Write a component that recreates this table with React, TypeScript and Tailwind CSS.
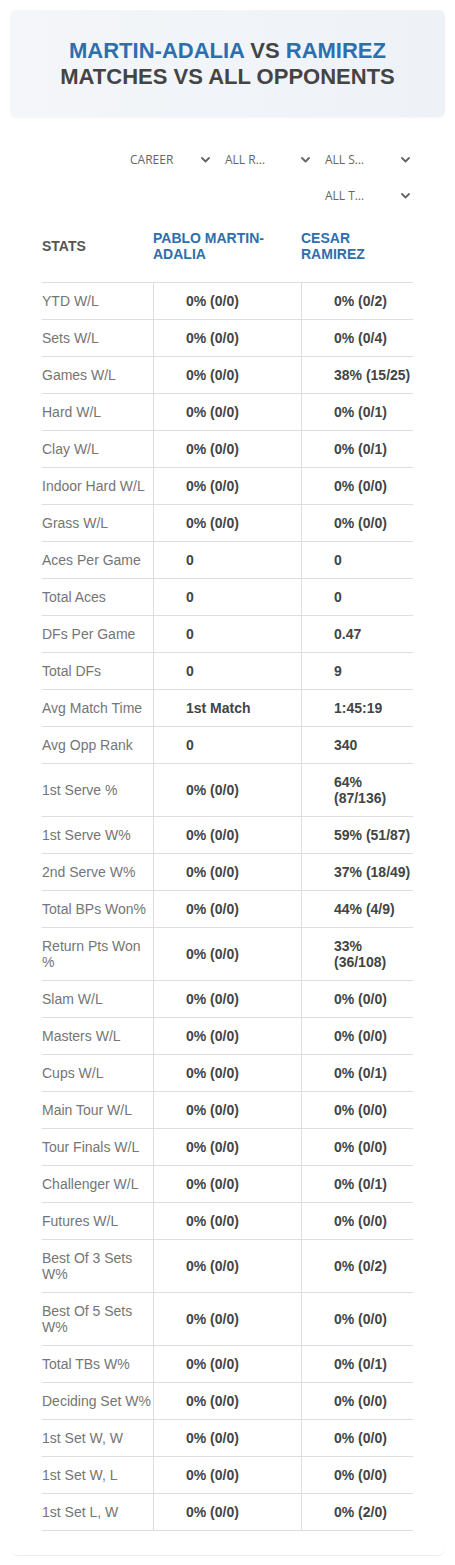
import React from "react";

const rows: [string, string, string][] = [
  ["YTD W/L", "0% (0/0)", "0% (0/2)"],
  ["Sets W/L", "0% (0/0)", "0% (0/4)"],
  ["Games W/L", "0% (0/0)", "38% (15/25)"],
  ["Hard W/L", "0% (0/0)", "0% (0/1)"],
  ["Clay W/L", "0% (0/0)", "0% (0/1)"],
  ["Indoor Hard W/L", "0% (0/0)", "0% (0/0)"],
  ["Grass W/L", "0% (0/0)", "0% (0/0)"],
  ["Aces Per Game", "0", "0"],
  ["Total Aces", "0", "0"],
  ["DFs Per Game", "0", "0.47"],
  ["Total DFs", "0", "9"],
  ["Avg Match Time", "1st Match", "1:45:19"],
  ["Avg Opp Rank", "0", "340"],
  ["1st Serve %", "0% (0/0)", "64% (87/136)"],
  ["1st Serve W%", "0% (0/0)", "59% (51/87)"],
  ["2nd Serve W%", "0% (0/0)", "37% (18/49)"],
  ["Total BPs Won%", "0% (0/0)", "44% (4/9)"],
  ["Return Pts Won %", "0% (0/0)", "33% (36/108)"],
  ["Slam W/L", "0% (0/0)", "0% (0/0)"],
  ["Masters W/L", "0% (0/0)", "0% (0/0)"],
  ["Cups W/L", "0% (0/0)", "0% (0/1)"],
  ["Main Tour W/L", "0% (0/0)", "0% (0/0)"],
  ["Tour Finals W/L", "0% (0/0)", "0% (0/0)"],
  ["Challenger W/L", "0% (0/0)", "0% (0/1)"],
  ["Futures W/L", "0% (0/0)", "0% (0/0)"],
  ["Best Of 3 Sets W%", "0% (0/0)", "0% (0/2)"],
  ["Best Of 5 Sets W%", "0% (0/0)", "0% (0/0)"],
  ["Total TBs W%", "0% (0/0)", "0% (0/1)"],
  ["Deciding Set W%", "0% (0/0)", "0% (0/0)"],
  ["1st Set W, W", "0% (0/0)", "0% (0/0)"],
  ["1st Set W, L", "0% (0/0)", "0% (0/0)"],
  ["1st Set L, W", "0% (0/0)", "0% (2/0)"],
];

function Chevron() {
  return (
    <svg width="9" height="6" viewBox="0 0 9 6" className="shrink-0">
      <path d="M1 1 L4.5 4.5 L8 1" fill="none" stroke="#666" strokeWidth="1.8" strokeLinecap="round" strokeLinejoin="round" />
    </svg>
  );
}

function Select({ label, first }: { label: string; first?: boolean }) {
  return (
    <div className={`w-[100px] h-[36px] flex items-center pr-[3px] ${first ? "pl-[17px]" : "pl-[12px]"}`}>
      <span className="whitespace-nowrap text-[12px] text-[#666]" style={{ fontFamily: '"Open Sans", "Noto Sans", sans-serif' }}>
        {label}
      </span>
      <span className="flex-1" />
      <Chevron />
    </div>
  );
}

export default function App() {
  return (
    <div className="w-[455px] bg-white min-h-[1565px]" style={{ fontFamily: '"Liberation Sans", Arial, sans-serif' }}>
      <div className="pt-[10px] px-[10px]">
        <div className="h-[107px] rounded-md bg-gradient-to-r from-[#f4f6f9] to-[#eef2f7] flex flex-col items-center justify-center text-[22px] leading-[26px] font-bold text-[#444] shadow-[0_1px_2px_rgba(0,0,0,0.04)]">
          <div>
            <span className="text-[#2d6fae]">MARTIN-ADALIA</span> VS <span className="text-[#2d6fae]">RAMIREZ</span>
          </div>
          <div>MATCHES VS ALL OPPONENTS</div>
        </div>
      </div>

      <div className="mx-[10px] rounded-b-lg border-b border-[#ececec] pb-[24px]">
        <div className="pt-[25px] px-[32px]">
          <div className="flex flex-wrap justify-end w-[371px]">
            <Select label="CAREER" first />
            <Select label="ALL R…" />
            <Select label="ALL S…" />
            <Select label="ALL T…" />
          </div>

          <div className="mt-[8px] w-[371px] text-[14px] leading-[16px]">
            <div className="grid grid-cols-[111px_148px_112px] items-center pt-[8px] pb-[20px] font-bold">
              <div className="text-[#555]">STATS</div>
              <div className="text-[#2d6fae]">PABLO MARTIN-<br />ADALIA</div>
              <div className="text-[#2d6fae]">CESAR<br />RAMIREZ</div>
            </div>
            {rows.map(([label, a, b]) => (
              <div key={label} className="grid grid-cols-[111px_148px_112px] border-t border-[#dedede] last:border-b">
                <div className="py-[10px] pr-[2px] text-[#757575] flex items-center">{label}</div>
                <div className="py-[10px] pl-[32px] border-l border-[#dedede] font-bold text-[#444] flex items-center">{a}</div>
                <div className="py-[10px] pl-[32px] border-l border-[#dedede] font-bold text-[#444] flex items-center">{b}</div>
              </div>
            ))}
          </div>
        </div>
      </div>
    </div>
  );
}
